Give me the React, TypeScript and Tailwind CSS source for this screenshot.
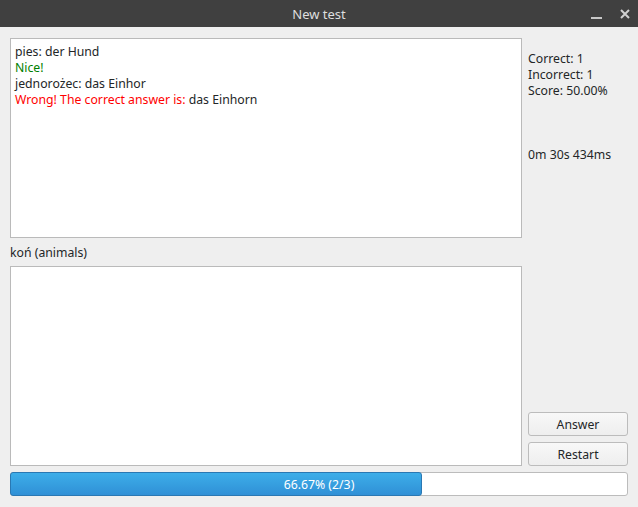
import React from "react";

const font = { fontFamily: '"Noto Sans", "DejaVu Sans", sans-serif' };

export default function App() {
  const correct = 1;
  const incorrect = 1;
  const total = 3;
  const done = 2;
  const pct = ((done / total) * 100).toFixed(2);

  return (
    <div
      className="w-[638px] h-[507px] flex flex-col bg-[#efefef] text-[12.25px] leading-[16px] text-[#232627]"
      style={font}
    >
      {/* Title bar */}
      <div className="relative h-[27px] bg-[#404040] flex items-center justify-center shrink-0">
        <span className="text-[13px] text-[#dedede]">New test</span>
        <div className="absolute right-[8px] top-0 h-full flex items-center gap-[18px]">
          <svg width="11" height="12" viewBox="0 0 11 12">
            <rect x="0" y="9" width="11" height="2" fill="#c8c8c8" />
          </svg>
          <svg width="10" height="10" viewBox="0 0 10 10">
            <path d="M1 1 L9 9 M9 1 L1 9" stroke="#d0d0d0" strokeWidth="2" />
          </svg>
        </div>
      </div>

      <div className="flex flex-col px-[10px] pt-[11px]">
        <div className="flex gap-[6px]">
          {/* Left column */}
          <div className="w-[512px] flex flex-col">
            <div className="h-[200px] bg-white border border-[#bababa] px-[4px] pt-[5px]">
              <div>pies: der Hund</div>
              <div className="text-[#008000]">Nice!</div>
              <div>jednorożec: das Einhor</div>
              <div>
                <span className="text-[#ff0000]">Wrong! The correct answer is:</span> das Einhorn
              </div>
            </div>
            <div className="h-[28px] pt-[2px] flex items-center">koń (animals)</div>
            <div className="h-[200px] bg-white border border-[#bababa]" />
          </div>

          {/* Right column */}
          <div className="w-[100px] flex flex-col justify-between">
            <div className="pt-[13px]">
              <div>Correct: {correct}</div>
              <div>Incorrect: {incorrect}</div>
              <div>Score: {((correct / (correct + incorrect)) * 100).toFixed(2)}%</div>
              <div className="mt-[48px]">0m 30s 434ms</div>
            </div>
            <div className="flex flex-col gap-[6px]">
              <button className="h-[24px] pt-[2px] rounded-[3px] border border-[#bcbcbc] bg-gradient-to-b from-[#f8f8f8] to-[#eeeeee] text-[12.25px] text-[#232627]">
                Answer
              </button>
              <button className="h-[24px] pt-[2px] rounded-[3px] border border-[#bcbcbc] bg-gradient-to-b from-[#f8f8f8] to-[#eeeeee] text-[12.25px] text-[#232627]">
                Restart
              </button>
            </div>
          </div>
        </div>

        {/* Progress bar */}
        <div className="relative mt-[6px] h-[24px] rounded-[3px] border border-[#bcbcbc] bg-white">
          <div className="absolute -left-px -top-px -bottom-px w-[412px] rounded-[3px] border border-[#2a78b3] bg-gradient-to-b from-[#3daee9] to-[#3090d6]" />
          <div className="absolute inset-0 pt-[2px] flex items-center justify-center text-white">
            {pct}% ({done}/{total})
          </div>
        </div>
      </div>
    </div>
  );
}
